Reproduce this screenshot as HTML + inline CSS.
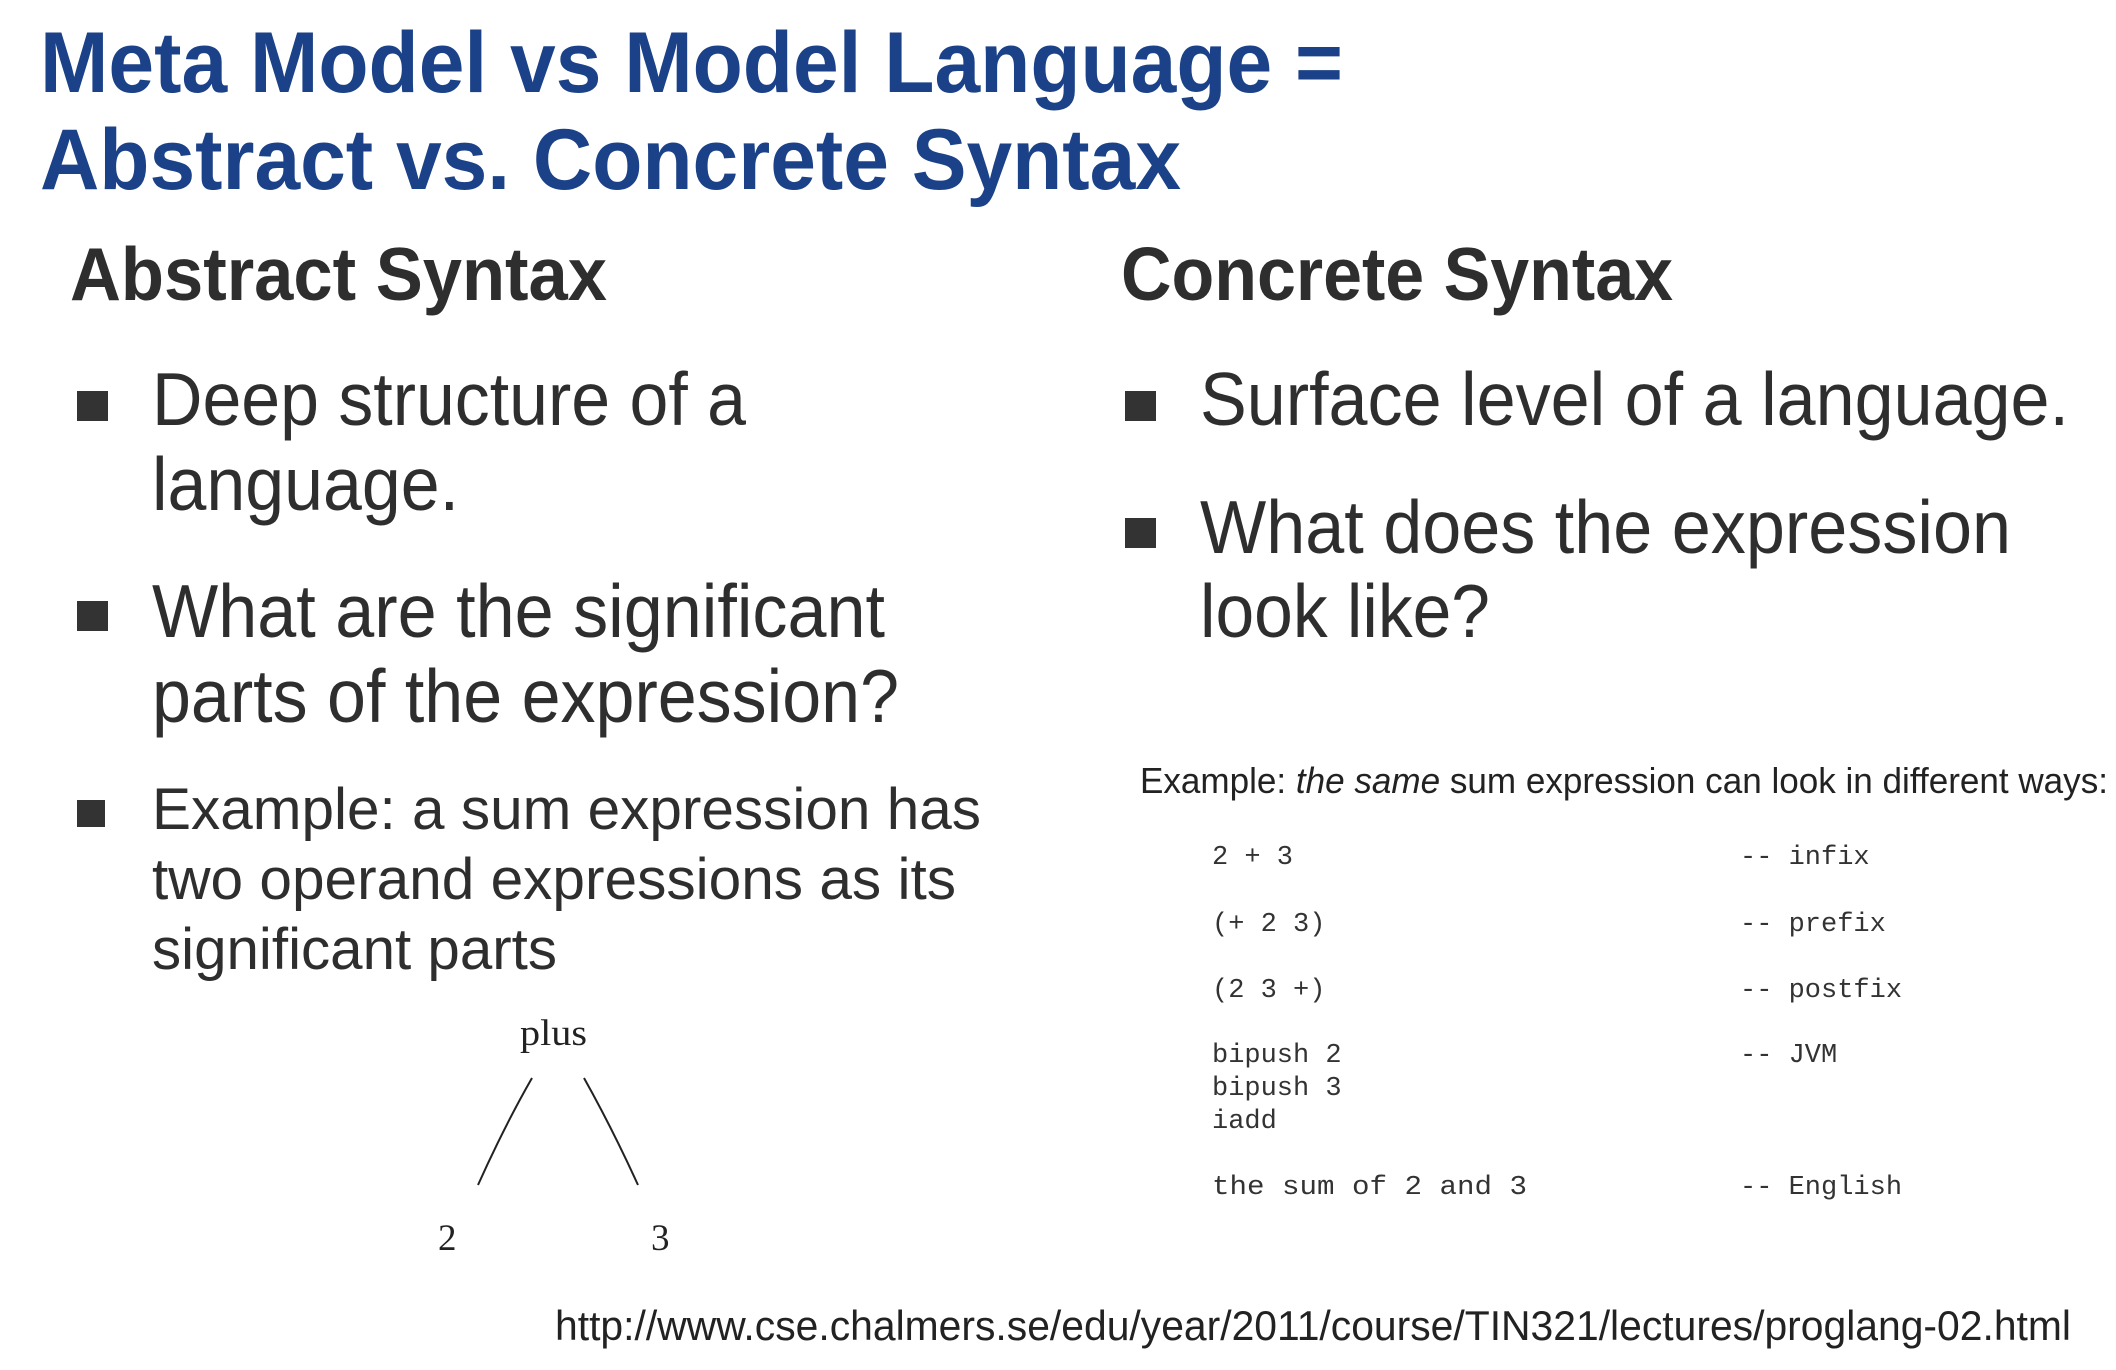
<!DOCTYPE html>
<html><head><meta charset="utf-8"><style>
html,body{margin:0;padding:0;background:#fff;width:2116px;height:1370px;overflow:hidden}
svg{display:block}
</style></head><body>
<svg width="2116" height="1370" viewBox="0 0 2116 1370" xmlns="http://www.w3.org/2000/svg">
<g font-family="Liberation Sans, Arial, sans-serif" font-weight="bold" fill="#1b4288" font-size="86">
<text x="40" y="92" textLength="1303" lengthAdjust="spacingAndGlyphs">Meta Model vs Model Language =</text>
<text x="40" y="189" textLength="1141" lengthAdjust="spacingAndGlyphs">Abstract vs. Concrete Syntax</text>
</g>
<g font-family="Liberation Sans, Arial, sans-serif" font-weight="bold" fill="#2e2e2e" font-size="75">
<text x="70" y="300" textLength="537" lengthAdjust="spacingAndGlyphs">Abstract Syntax</text>
<text x="1121" y="300" textLength="552" lengthAdjust="spacingAndGlyphs">Concrete Syntax</text>
</g>
<g fill="#333">
<rect x="77" y="391" width="31" height="30"/>
<rect x="77" y="601" width="31" height="30"/>
<rect x="77" y="800" width="28" height="27"/>
<rect x="1125" y="391" width="31" height="30"/>
<rect x="1125" y="518" width="31" height="30"/>
</g>
<g font-family="Liberation Sans, Arial, sans-serif" fill="#2e2e2e" font-size="75">
<text x="152" y="425" textLength="594" lengthAdjust="spacingAndGlyphs">Deep structure of a</text>
<text x="152" y="510" textLength="307" lengthAdjust="spacingAndGlyphs">language.</text>
<text x="152" y="637" textLength="733" lengthAdjust="spacingAndGlyphs">What are the significant</text>
<text x="152" y="722" textLength="747" lengthAdjust="spacingAndGlyphs">parts of the expression?</text>
<text x="1200" y="425" textLength="869" lengthAdjust="spacingAndGlyphs">Surface level of a language.</text>
<text x="1200" y="553" textLength="811" lengthAdjust="spacingAndGlyphs">What does the expression</text>
<text x="1200" y="637" textLength="290" lengthAdjust="spacingAndGlyphs">look like?</text>
</g>
<g font-family="Liberation Sans, Arial, sans-serif" fill="#2e2e2e" font-size="58">
<text x="152" y="829" textLength="829" lengthAdjust="spacingAndGlyphs">Example: a sum expression has</text>
<text x="152" y="899" textLength="804" lengthAdjust="spacingAndGlyphs">two operand expressions as its</text>
<text x="152" y="969" textLength="405" lengthAdjust="spacingAndGlyphs">significant parts</text>
</g>
<g font-family="Liberation Serif, Times New Roman, serif" fill="#222" font-size="37">
<text x="520" y="1045" textLength="67" lengthAdjust="spacingAndGlyphs">plus</text>
<text x="438" y="1250">2</text>
<text x="651" y="1250">3</text>
</g>
<g stroke="#222" stroke-width="2" fill="none">
<path d="M532 1078 Q505 1125 478 1185"/>
<path d="M584 1078 Q612 1128 638 1185"/>
</g>
<text x="1140" y="793" font-family="Liberation Sans, Arial, sans-serif" font-size="36" fill="#222" textLength="968" lengthAdjust="spacingAndGlyphs">Example: <tspan font-style="italic">the same</tspan> sum expression can look in different ways:</text>
<g font-family="Liberation Mono, Courier New, monospace" font-size="27" fill="#333">
<text x="1212" y="864">2 + 3</text>
<text x="1212" y="931">(+ 2 3)</text>
<text x="1212" y="997">(2 3 +)</text>
<text x="1212" y="1062">bipush 2</text>
<text x="1212" y="1095">bipush 3</text>
<text x="1212" y="1128">iadd</text>
<text x="1212" y="1194" textLength="315" lengthAdjust="spacingAndGlyphs">the sum of 2 and 3</text>
<text x="1740" y="864">-- infix</text>
<text x="1740" y="931">-- prefix</text>
<text x="1740" y="997">-- postfix</text>
<text x="1740" y="1062">-- JVM</text>
<text x="1740" y="1194">-- English</text>
</g>
<text x="555" y="1340" font-family="Liberation Sans, Arial, sans-serif" font-size="42" fill="#222" textLength="1516" lengthAdjust="spacingAndGlyphs">http://www.cse.chalmers.se/edu/year/2011/course/TIN321/lectures/proglang-02.html</text>
</svg>
</body></html>
